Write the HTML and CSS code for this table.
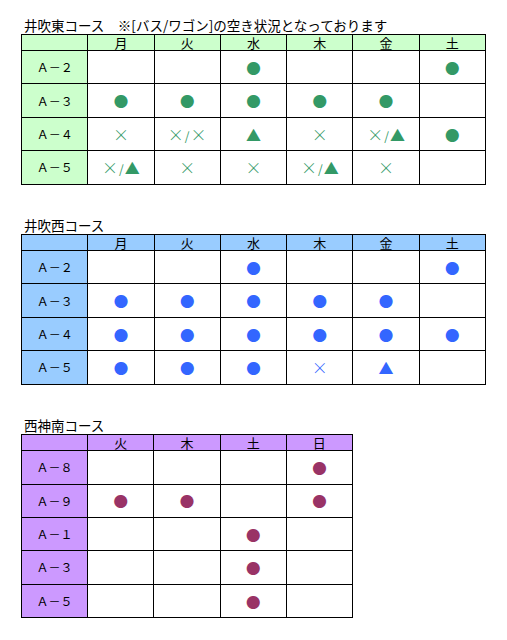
FILE: index.html
```html
<!DOCTYPE html>
<html lang="ja">
<head>
<meta charset="utf-8">
<title>空き状況</title>
<link rel="stylesheet" href="styles.css">
</head>
<body>
<section class="section green">
  <div class="title">井吹東コース　※[バス/ワゴン]の空き状況となっております</div>
  <table class="grid wide">
    <thead>
      <tr><th></th><th>月</th><th>火</th><th>水</th><th>木</th><th>金</th><th>土</th></tr>
    </thead>
    <tbody>
      <tr><th>Ａ－２</th><td></td><td></td><td><span class="dot">●</span></td><td></td><td></td><td><span class="dot">●</span></td></tr>
      <tr><th>Ａ－３</th><td><span class="dot">●</span></td><td><span class="dot">●</span></td><td><span class="dot">●</span></td><td><span class="dot">●</span></td><td><span class="dot">●</span></td><td></td></tr>
      <tr><th>Ａ－４</th><td><span class="x">×</span></td><td><span class="x">×</span><span class="sl">/</span><span class="x">×</span></td><td><span class="tri">▲</span></td><td><span class="x">×</span></td><td><span class="x">×</span><span class="sl">/</span><span class="tri">▲</span></td><td><span class="dot">●</span></td></tr>
      <tr><th>Ａ－５</th><td><span class="x">×</span><span class="sl">/</span><span class="tri">▲</span></td><td><span class="x">×</span></td><td><span class="x">×</span></td><td><span class="x">×</span><span class="sl">/</span><span class="tri">▲</span></td><td><span class="x">×</span></td><td></td></tr>
    </tbody>
  </table>
</section>

<section class="section blue">
  <div class="title">井吹西コース</div>
  <table class="grid wide">
    <thead>
      <tr><th></th><th>月</th><th>火</th><th>水</th><th>木</th><th>金</th><th>土</th></tr>
    </thead>
    <tbody>
      <tr><th>Ａ－２</th><td></td><td></td><td><span class="dot">●</span></td><td></td><td></td><td><span class="dot">●</span></td></tr>
      <tr><th>Ａ－３</th><td><span class="dot">●</span></td><td><span class="dot">●</span></td><td><span class="dot">●</span></td><td><span class="dot">●</span></td><td><span class="dot">●</span></td><td></td></tr>
      <tr><th>Ａ－４</th><td><span class="dot">●</span></td><td><span class="dot">●</span></td><td><span class="dot">●</span></td><td><span class="dot">●</span></td><td><span class="dot">●</span></td><td><span class="dot">●</span></td></tr>
      <tr><th>Ａ－５</th><td><span class="dot">●</span></td><td><span class="dot">●</span></td><td><span class="dot">●</span></td><td><span class="x">×</span></td><td><span class="tri">▲</span></td><td></td></tr>
    </tbody>
  </table>
</section>

<section class="section purple">
  <div class="title">西神南コース</div>
  <table class="grid narrow">
    <thead>
      <tr><th></th><th>火</th><th>木</th><th>土</th><th>日</th></tr>
    </thead>
    <tbody>
      <tr><th>Ａ－８</th><td></td><td></td><td></td><td><span class="dot">●</span></td></tr>
      <tr><th>Ａ－９</th><td><span class="dot">●</span></td><td><span class="dot">●</span></td><td></td><td><span class="dot">●</span></td></tr>
      <tr><th>Ａ－１</th><td></td><td></td><td><span class="dot">●</span></td><td></td></tr>
      <tr><th>Ａ－３</th><td></td><td></td><td><span class="dot">●</span></td><td></td></tr>
      <tr><th>Ａ－５</th><td></td><td></td><td><span class="dot">●</span></td><td></td></tr>
    </tbody>
  </table>
</section>
</body>
</html>
```

FILE: styles.css
```css
html, body {
  background: #ffffff;
}
body {
  margin: 0;
  padding: 17px 0 0 21px;
  font-family: "Noto Sans CJK JP", "Noto Sans", sans-serif;
  color: #000000;
}
.section + .section {
  margin-top: 32.5px;
}
.title {
  height: 17px;
  font-size: 13.5px;
  line-height: 17px;
  padding-left: 3px;
  white-space: nowrap;
}
.grid {
  border-collapse: collapse;
  table-layout: fixed;
}
.grid.wide {
  width: 465px;
}
.grid.narrow {
  width: 332px;
}
.grid th,
.grid td {
  border: 1px solid #000000;
  padding: 0;
  text-align: center;
  vertical-align: middle;
  font-weight: normal;
  line-height: 1;
}
.grid thead th {
  height: 15px;
  font-size: 13px;
  line-height: 15px;
}
.grid tbody th,
.grid tbody td {
  height: 32.4px;
}
.grid tbody th {
  font-size: 12px;
}
.green thead th,
.green tbody th { background: #ccffcc; }
.green td { color: #339966; }
.blue thead th,
.blue tbody th { background: #99ccff; }
.blue td { color: #3366ff; }
.purple thead th,
.purple tbody th { background: #cc99ff; }
.purple td { color: #993366; }

.dot {
  font-size: 14.5px;
}
.tri {
  font-size: 15px;
}
.x {
  font-size: 16px;
  font-weight: 300;
}
.sl {
  font-size: 12px;
  margin: 0 1px;
}
```
